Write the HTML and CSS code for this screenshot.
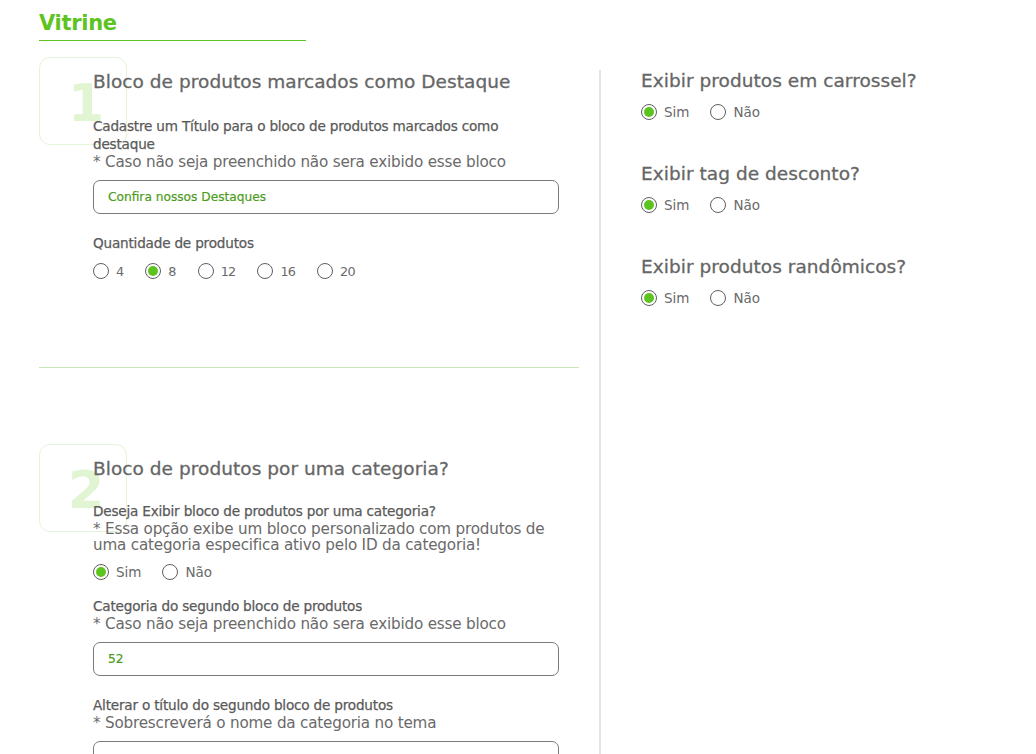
FILE: index.html
```html
<!DOCTYPE html>
<html lang="pt-BR">
<head>
<meta charset="utf-8">
<title>Vitrine</title>
<link rel="stylesheet" href="styles.css">
</head>
<body>
<div class="page">
  <h1 class="page-title">Vitrine</h1>
  <div class="columns">
    <div class="col-left">
      <section class="block block-1">
        <div class="num-box">1</div>
        <h2 class="block-title">Bloco de produtos marcados como Destaque</h2>
        <p class="label label-first">Cadastre um Título para o bloco de produtos marcados como destaque</p>
        <p class="hint">* Caso não seja preenchido não sera exibido esse bloco</p>
        <div class="input">Confira nossos Destaques</div>
        <p class="label label-gap">Quantidade de produtos</p>
        <div class="radios radios-num">
          <span class="opt"><span class="radio"></span>4</span>
          <span class="opt"><span class="radio checked"></span>8</span>
          <span class="opt"><span class="radio"></span>12</span>
          <span class="opt"><span class="radio"></span>16</span>
          <span class="opt"><span class="radio"></span>20</span>
        </div>
      </section>
      <hr class="sep">
      <section class="block block-2">
        <div class="num-box">2</div>
        <h2 class="block-title">Bloco de produtos por uma categoria?</h2>
        <p class="label label-first2">Deseja Exibir bloco de produtos por uma categoria?</p>
        <p class="hint">* Essa opção exibe um bloco personalizado com produtos de uma categoria especifica ativo pelo ID da categoria!</p>
        <div class="radios">
          <span class="opt"><span class="radio checked"></span>Sim</span>
          <span class="opt"><span class="radio"></span>Não</span>
        </div>
        <p class="label label-gap2">Categoria do segundo bloco de produtos</p>
        <p class="hint">* Caso não seja preenchido não sera exibido esse bloco</p>
        <div class="input">52</div>
        <p class="label label-gap">Alterar o título do segundo bloco de produtos</p>
        <p class="hint">* Sobrescreverá o nome da categoria no tema</p>
        <div class="input"></div>
      </section>
    </div>
    <div class="col-right">
      <div class="option-group">
        <h2 class="block-title">Exibir produtos em carrossel?</h2>
        <div class="radios">
          <span class="opt"><span class="radio checked"></span>Sim</span>
          <span class="opt"><span class="radio"></span>Não</span>
        </div>
      </div>
      <div class="option-group">
        <h2 class="block-title">Exibir tag de desconto?</h2>
        <div class="radios">
          <span class="opt"><span class="radio checked"></span>Sim</span>
          <span class="opt"><span class="radio"></span>Não</span>
        </div>
      </div>
      <div class="option-group">
        <h2 class="block-title">Exibir produtos randômicos?</h2>
        <div class="radios">
          <span class="opt"><span class="radio checked"></span>Sim</span>
          <span class="opt"><span class="radio"></span>Não</span>
        </div>
      </div>
    </div>
  </div>
</div>
</body>
</html>
```
FILE: styles.css
```css
html, body {
  margin: 0;
  padding: 0;
  background: #ffffff;
}
body {
  font-family: "DejaVu Sans", "Noto Sans", sans-serif;
  color: #666666;
  overflow: hidden;
  height: 754px;
}
.page {
  padding-left: 39px;
}
.page-title {
  margin: 0;
  padding-top: 8px;
  width: 267px;
  height: 41px;
  box-sizing: border-box;
  font-size: 21px;
  line-height: 30px;
  font-weight: 700;
  color: #5dc41f;
  border-bottom: 1px solid #5dc41f;
  letter-spacing: -0.3px;
}
.columns {
  display: grid;
  grid-template-columns: 540px 1fr;
  column-gap: 20px;
  margin-top: 16px;
}
.col-left {
  display: flex;
  flex-direction: column;
}
.block {
  position: relative;
  padding-left: 54px;
  width: 466px;
}
.num-box {
  position: absolute;
  left: 0;
  top: 0;
  width: 88px;
  height: 88px;
  box-sizing: border-box;
  border: 1px solid #e3f4d8;
  border-radius: 11px;
  font-size: 52px;
  font-weight: 700;
  color: #e1f5d3;
  display: flex;
  align-items: center;
  justify-content: center;
  padding-top: 4px;
  padding-left: 6px;
  z-index: 0;
}
.block > *:not(.num-box) {
  position: relative;
  z-index: 1;
}
.block-title {
  margin: 14px 0 0;
  font-size: 18.5px;
  line-height: 22px;
  font-weight: 400;
  color: #666666;
  -webkit-text-stroke: 0.3px #666666;
  letter-spacing: 0.05px;
}
.label {
  margin: 0;
  font-size: 13.6px;
  line-height: 18px;
  color: #5a5a5a;
  letter-spacing: -0.2px;
  -webkit-text-stroke: 0.25px #5a5a5a;
}
.label-first { margin-top: 24px; }
.label-first2 { margin-top: 22px; }
.label-gap { margin-top: 20px; }
.label-gap2 { margin-top: 16px; }
.hint {
  margin: 1px 0 0;
  font-size: 15.2px;
  line-height: 16px;
  color: #6a6a6a;
  letter-spacing: -0.2px;
}
.input {
  margin-top: 10px;
  height: 34px;
  box-sizing: border-box;
  border: 1px solid #7a7a7a;
  border-radius: 7px;
  padding-left: 14px;
  display: flex;
  align-items: center;
  font-size: 12.2px;
  color: #4c9c1c;
  -webkit-text-stroke: 0.2px #4c9c1c;
}
.radios {
  margin-top: 10px;
  display: flex;
  align-items: center;
  height: 18px;
}
.opt {
  display: inline-flex;
  align-items: center;
  font-size: 13.5px;
  color: #6a6a6a;
  margin-right: 21px;
}
.radios-num .opt {
  font-size: 12.8px;
  letter-spacing: -0.8px;
  margin-right: 22px;
}
.radio {
  width: 16px;
  height: 16px;
  box-sizing: border-box;
  border: 1px solid #5f5f5f;
  border-radius: 50%;
  margin-right: 7px;
  display: inline-flex;
  align-items: center;
  justify-content: center;
}
.radio.checked::after {
  content: "";
  width: 10px;
  height: 10px;
  border-radius: 50%;
  background: #5dc41f;
}
.sep {
  margin: 87px 0 0;
  width: 540px;
  border: 0;
  border-top: 1px solid #c9e6b6;
  height: 0;
}
.block-2 {
  margin-top: 76px;
}
.col-right {
  margin-top: 13px;
  border-left: 2px solid #e4e4e4;
  padding-left: 40px;
  min-height: 700px;
}
.col-right .block-title {
  margin-top: 0;
}
.option-group + .option-group {
  margin-top: 42px;
}
.col-right .radios {
  margin-top: 11px;
}
```
